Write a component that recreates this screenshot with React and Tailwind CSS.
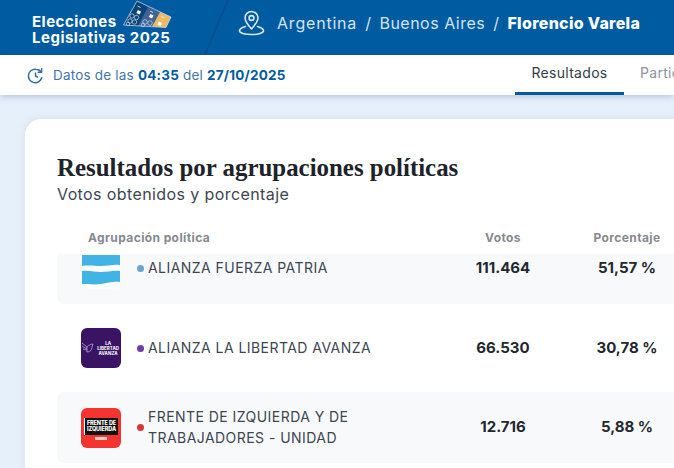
const sans = { fontFamily: '"Inter", "Liberation Sans", sans-serif' };

function Ballots() {
  const c = "#c8d6e6";
  return (
    <svg width="52" height="30" viewBox="122 0 52 30" className="absolute left-[122px] top-0" fill="none">
      <path d="M137 1L148.500 6.500L138 26L123.500 25z" fill="#0d4478" />
      <path d="M148.500 6.500L160 12L152 26.500L138 26z" fill="#3f6499" />
      <path d="M160 12L171 17L166 27.500L152 26.500z" fill="#ecb964" />
      <path d="M137 1L171 17L166 27.500L123.500 25z" stroke="#d6e4f1" strokeWidth="0.700" />
      <rect x="137" y="10.500" width="3.500" height="3.500" fill="#fff" transform="rotate(25 138.700 12.200)" />
      <rect x="149.500" y="14.500" width="3.500" height="3.500" fill="#fff" transform="rotate(25 151.200 16.200)" />
      <rect x="158" y="22" width="3.500" height="3.500" fill="#fff" transform="rotate(25 159.700 23.700)" />
      <path d="M137.500 6l3 1.500M150 11l3 1.500M161 16.500l3 1.500" stroke="#e8eef5" strokeWidth="0.800" />
      <g stroke={c} strokeWidth="0.700">
        <circle cx="132" cy="16" r="2.200" />
        <circle cx="136.500" cy="17.500" r="2.200" />
        <circle cx="130" cy="21" r="2.200" />
        <circle cx="134.500" cy="22" r="2.200" />
        <circle cx="128" cy="24" r="1.800" />
        <circle cx="145" cy="22" r="2.300" />
        <circle cx="150" cy="23" r="2.300" />
        <circle cx="143" cy="25" r="1.800" />
      </g>
    </svg>
  );
}

function PinIcon() {
  return (
    <svg width="27" height="27" viewBox="0 0 27 27" fill="none" stroke="#dce9f4" strokeWidth="1.600" strokeLinecap="round" strokeLinejoin="round">
      <path d="M13.500 20c-3.500-4-6.500-7.400-6.500-11a6.500 6.500 0 0 1 13 0c0 3.600-3 7-6.500 11z" />
      <circle cx="13.500" cy="9" r="2.400" />
      <path d="M7.500 17.500C4 18.500 1.500 20 1.500 21.800c0 2 5 3.700 12 3.700s12-1.700 12-3.700c0-1.800-2.500-3.300-6-4.300" />
    </svg>
  );
}

function ClockIcon() {
  return (
    <svg width="17" height="17" viewBox="0 0 17 17" fill="none" stroke="#2e6da4" strokeWidth="1.500" strokeLinecap="round" strokeLinejoin="round">
      <path d="M14.800 10.500A6.800 6.800 0 1 1 9 2.200c2.200.1 4 1.100 5.200 2.800" />
      <path d="M14.600 1.800v3.500h-3.400" />
      <path d="M8.500 6v3l2 1" />
    </svg>
  );
}

function FlagLogo() {
  return (
    <svg width="40" height="40" viewBox="0 0 40 40">
      <rect width="40" height="40" rx="6" fill="#fcfcfd" />
      <path d="M1 6h38v10c-7-1-12 1-19 1s-12-1-19 0z" fill="#41b3e4" />
      <path d="M1 22c7-1 12 1 19 1s12-2 19-1v11c-7-1-12 1-19 2s-12 0-19 0z" fill="#41b3e4" />
    </svg>
  );
}

function LlaLogo() {
  return (
    <div className="w-10 h-10 rounded-md bg-[#3a1364] flex items-center justify-end pr-[2px]">
      <svg width="15" height="14" viewBox="0 0 15 14" fill="none" stroke="#c9b7dd" strokeWidth="0.700" className="mr-[1px]">
        <path d="M1 2l5 4M1 5l5 3M2 8l4 1M6 6c2-2 4-3 6-3l-1 3c0 3-2 5-5 5z" />
      </svg>
      <div className="text-white font-bold text-[4.500px] leading-[5px] text-center">LA<br />LIBERTAD<br />AVANZA</div>
    </div>
  );
}

function FitLogo() {
  return (
    <div className="w-10 h-10 rounded-md bg-[#f5332f] flex flex-col items-center pt-[10px]">
      <div className="w-[34px] h-[17px] bg-[#111] border-l border-white text-white font-extrabold text-[5.500px] leading-[6px] text-center pt-[2px] tracking-[-0.100px] whitespace-nowrap">FRENTE DE<br />IZQUIERDA</div>
      <div className="w-[12px] h-[3px] mt-[2px] bg-[#f4c9c7]" />
    </div>
  );
}

function Row({ logo, dot, name, votes, pct, className }) {
  return (
    <div className={`flex items-center ${className}`}>
      <div className="w-[24px] shrink-0" />
      <div className="w-[40px] shrink-0 flex justify-center">{logo}</div>
      <div className="w-[23px] shrink-0 flex justify-end self-stretch items-center">
        <span className={`w-[7px] h-[7px] rounded-full ${dot}`} />
      </div>
      <div className="w-[4px] shrink-0" />
      <div className="w-[280px] shrink-0 text-[14px] leading-[20.500px] tracking-[0.450px] text-[#3b4650]">{name}</div>
      <div className="w-[150px] shrink-0 text-center text-[15px] font-bold text-[#22282e]">{votes}</div>
      <div className="w-[100px] shrink-0 -ml-[1px] text-center text-[15px] font-bold text-[#22282e]">{pct}</div>
    </div>
  );
}

export default function App() {
  return (
    <div className="w-[674px] h-[468px] overflow-hidden bg-[#e6f0fb] flex flex-col" style={sans}>
      <header className="relative h-[55px] shrink-0 bg-[#005ba0] flex items-center pb-[10px] overflow-hidden">
        <div className="relative w-[238px] shrink-0 self-start pl-[32px] pt-[14px] text-white font-bold text-[15px] leading-[16px] tracking-[0.500px]">
          <div>Elecciones</div>
          <div className="whitespace-nowrap">Legislativas 2025</div>
        </div>
        <Ballots />
        <svg width="28" height="55" viewBox="0 0 28 55" className="absolute left-[204px] top-0">
          <path d="M24 0L1 55" stroke="#08508c" strokeWidth="1.500" />
        </svg>
        <PinIcon />
        <div className="ml-[12px] flex items-center gap-[8px] text-[16px] tracking-[0.500px] text-[#d5e4f1] whitespace-nowrap">
          <span className="tracking-[0.800px]">Argentina</span><span>/</span><span>Buenos Aires</span><span>/</span>
          <span className="font-extrabold text-white tracking-[0.300px]">Florencio Varela</span>
        </div>
      </header>

      <div className="relative z-10 h-[40px] shrink-0 bg-white shadow-[0_2px_6px_rgba(60,80,110,0.25)] flex items-stretch">
        <div className="w-[515px] shrink-0 flex items-center pl-[27px]">
          <ClockIcon />
          <span className="ml-[9px] text-[13.500px] tracking-[0.200px] text-[#3f76a8] whitespace-nowrap">
            Datos de las <b className="text-[#005ba0]">04:35</b> del <b className="text-[#005ba0]">27/10/2025</b>
          </span>
        </div>
        <div className="w-[109px] shrink-0 flex items-center justify-center text-[14px] tracking-[0.300px] text-[#333b44] border-b-[3px] border-[#005ba0] pb-[2px]">Resultados</div>
        <div className="pl-[16px] flex items-center text-[14px] tracking-[0.300px] text-[#8d949b] pb-[5px]">Participación</div>
      </div>

      <div className="flex-1 pl-[25px] pt-[24px] min-h-0">
        <div className="w-[720px] h-[400px] bg-white rounded-[16px] shadow-[0_0_8px_rgba(120,140,170,0.15)] pl-[32px] pr-[40px] pt-[35px]">
          <h1 className="text-[24.900px] leading-[28px] font-bold text-[#1d2329] whitespace-nowrap" style={{ fontFamily: '"Liberation Serif", serif' }}>
            Resultados por agrupaciones políticas
          </h1>
          <p className="text-[16px] leading-[20px] tracking-[0.400px] text-[#3b4650] mt-[2px]">Votos obtenidos y porcentaje</p>

          <div className="flex mt-[25px] h-[25px] text-[12px] leading-[17px] font-bold tracking-[0.400px] text-[#85898f]">
            <div className="w-[371px] shrink-0 pl-[31px]">Agrupación política</div>
            <div className="w-[150px] shrink-0 text-center">Votos</div>
            <div className="w-[100px] shrink-0 text-center -ml-[1px]">Porcentaje</div>
          </div>

          <div className="h-[300px] overflow-hidden">
            <div className="-mt-[21px]">
              <Row className="h-[71px] bg-[#f8f9fb] rounded-md" dot="bg-[#6ba4cf]" logo={<FlagLogo />} name="ALIANZA FUERZA PATRIA" votes="111.464" pct="51,57 %" />
              <Row className="h-[88px]" dot="bg-[#6f3da8]" logo={<LlaLogo />} name="ALIANZA LA LIBERTAD AVANZA" votes="66.530" pct="30,78 %" />
              <Row className="h-[71px] bg-[#f8f9fb] rounded-md" dot="bg-[#d9363a]" logo={<FitLogo />} name={<>FRENTE DE IZQUIERDA Y DE<br />TRABAJADORES - UNIDAD</>} votes="12.716" pct="5,88 %" />
            </div>
          </div>
        </div>
      </div>
    </div>
  );
}
